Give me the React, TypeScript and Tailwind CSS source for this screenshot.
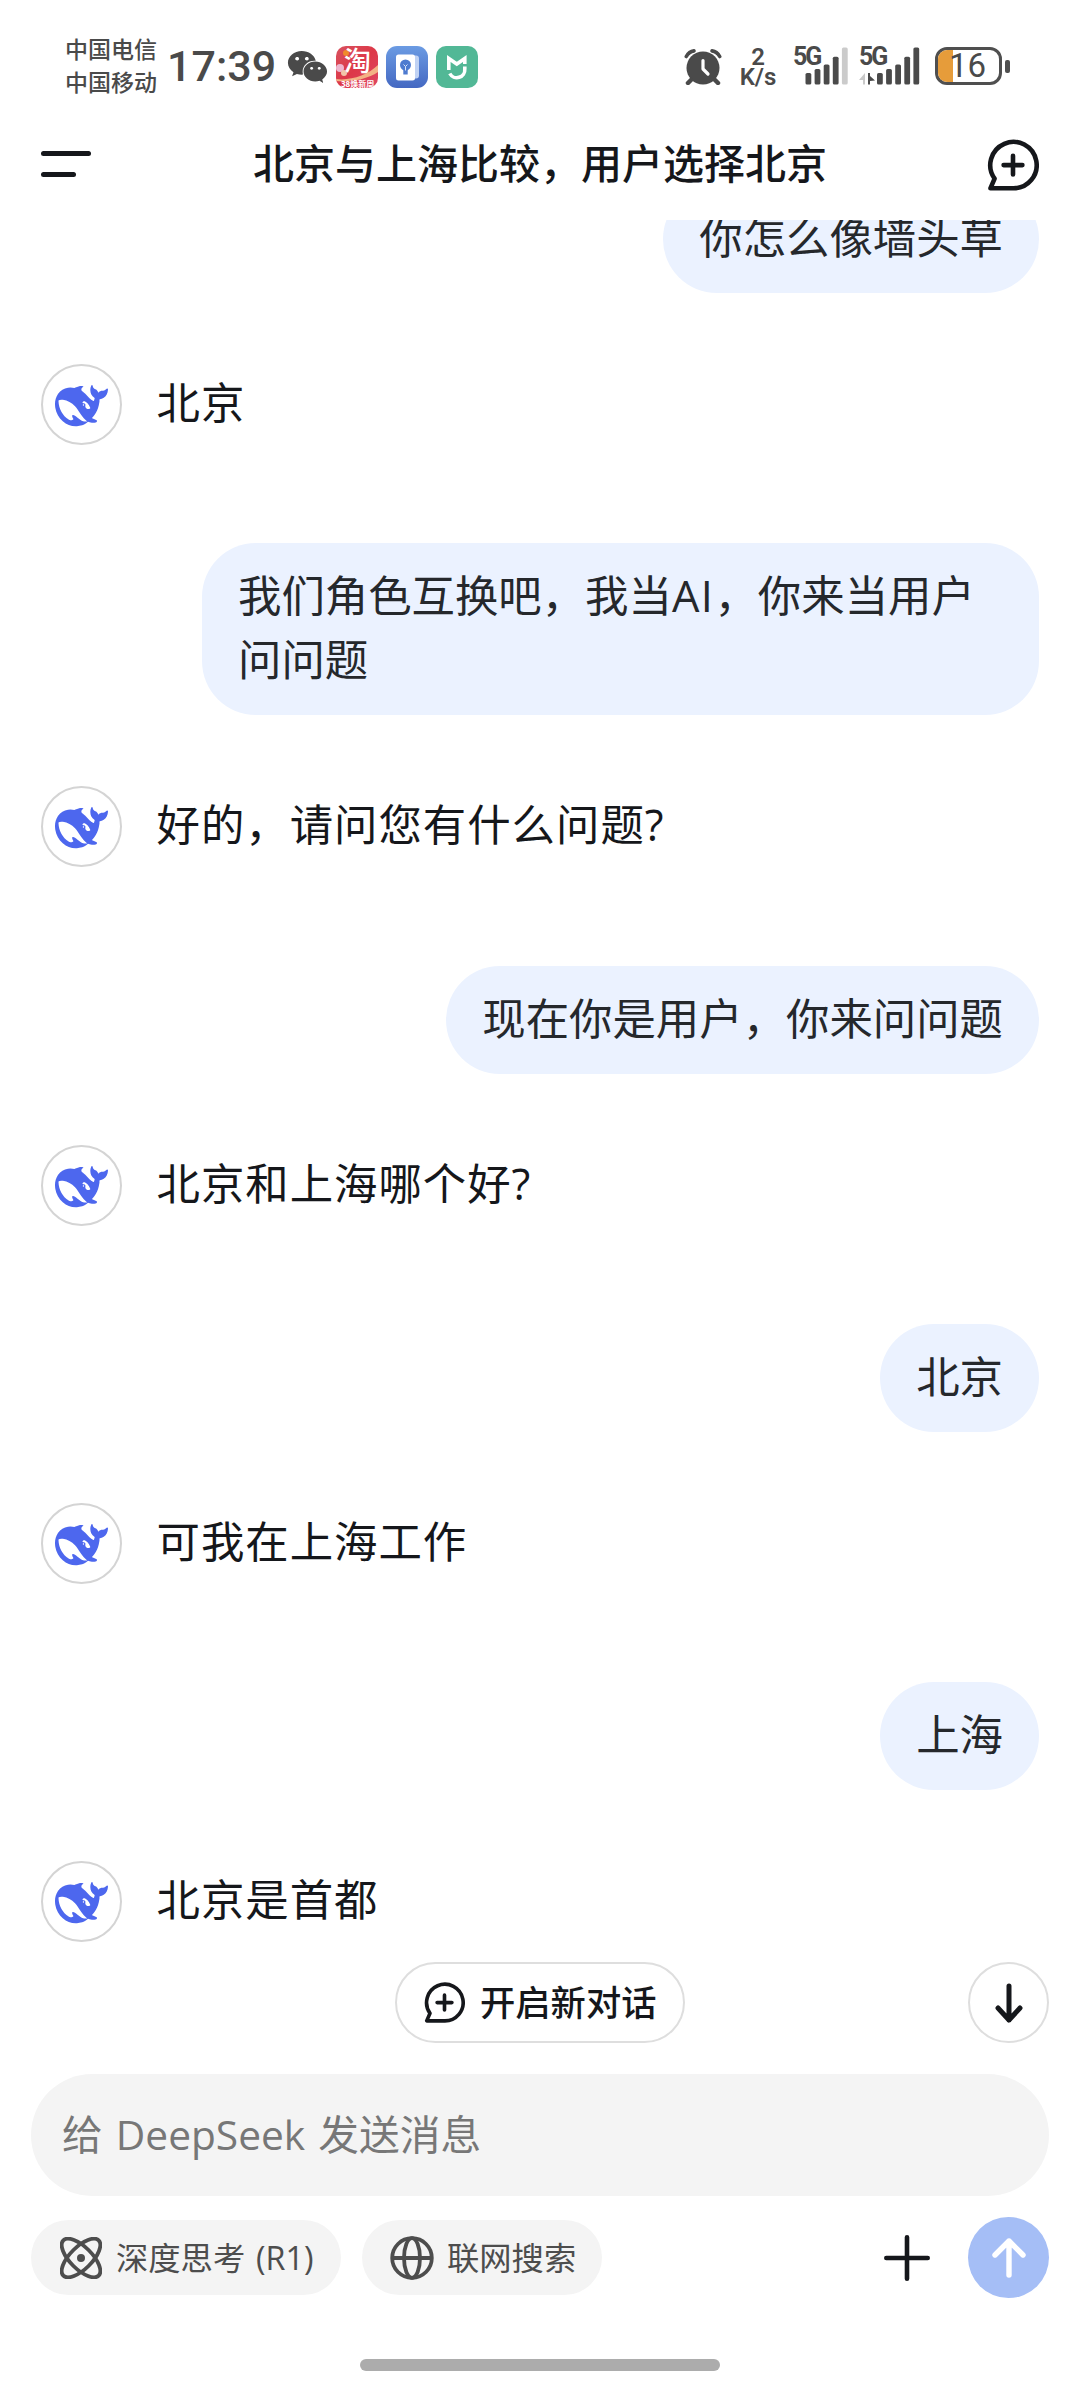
import React from 'react';
import { FaWeixin } from 'react-icons/fa';

type Message = {
  role: 'user' | 'bot';
  text: string;
};

const messages: Message[] = [
  { role: 'user', text: '你怎么像墙头草' },
  { role: 'bot', text: '北京' },
  { role: 'user', text: '我们角色互换吧，我当AI，你来当用户问问题' },
  { role: 'bot', text: '好的，请问您有什么问题?' },
  { role: 'user', text: '现在你是用户，你来问问题' },
  { role: 'bot', text: '北京和上海哪个好?' },
  { role: 'user', text: '北京' },
  { role: 'bot', text: '可我在上海工作' },
  { role: 'user', text: '上海' },
  { role: 'bot', text: '北京是首都' },
];

function WhaleIcon() {
  return (
    <svg viewBox="0 0 24 24" preserveAspectRatio="none" className="mt-[3px] ml-[1px] h-[56px] w-[53px] shrink-0 fill-[#4d67ee]">
      <path d="M23.748 4.482c-.254-.124-.364.113-.512.234-.051.039-.094.09-.137.136-.372.397-.806.657-1.373.626-.829-.046-1.537.214-2.163.848-.133-.782-.575-1.248-1.247-1.548-.352-.156-.708-.311-.955-.65-.172-.241-.219-.51-.305-.774-.055-.16-.11-.323-.293-.35-.2-.031-.278.136-.356.276-.313.572-.434 1.202-.422 1.84.027 1.436.633 2.58 1.838 3.393.137.093.172.187.129.323-.082.28-.18.552-.266.833-.055.179-.137.217-.329.14a5.526 5.526 0 01-1.736-1.18c-.857-.828-1.631-1.742-2.597-2.458a11.365 11.365 0 00-.689-.471c-.985-.957.13-1.743.388-1.836.27-.098.093-.432-.779-.428-.872.004-1.67.295-2.687.684a3.055 3.055 0 01-.465.137 9.597 9.597 0 00-2.883-.102c-1.885.21-3.39 1.102-4.497 2.623C.082 8.606-.231 10.684.152 12.85c.403 2.284 1.569 4.175 3.36 5.653 1.858 1.533 3.997 2.284 6.438 2.14 1.482-.085 3.133-.284 4.994-1.86.47.234.962.327 1.78.397.63.059 1.236-.03 1.705-.128.735-.156.684-.837.419-.961-2.155-1.004-1.682-.595-2.113-.926 1.096-1.296 2.746-2.642 3.392-7.003.05-.347.007-.565 0-.845-.004-.17.035-.237.23-.256a4.173 4.173 0 001.545-.475c1.396-.763 1.96-2.015 2.093-3.517.02-.23-.004-.467-.247-.588zM11.581 18c-2.089-1.642-3.102-2.183-3.52-2.16-.392.024-.321.471-.235.763.09.288.207.486.371.739.114.167.192.416-.113.603-.673.416-1.842-.14-1.897-.167-1.361-.802-2.5-1.86-3.301-3.307-.774-1.393-1.224-2.887-1.298-4.482-.02-.386.093-.522.477-.592a4.696 4.696 0 011.529-.039c2.132.312 3.946 1.265 5.468 2.774.868.86 1.525 1.887 2.202 2.891.72 1.066 1.494 2.082 2.48 2.914.348.292.625.514.891.677-.802.09-2.14.11-3.054-.614zm1-6.44a.306.306 0 01.415-.287.302.302 0 01.2.288.306.306 0 01-.31.307.303.303 0 01-.304-.308zm3.11 1.596c-.2.081-.399.151-.59.16a1.245 1.245 0 01-.798-.254c-.274-.23-.47-.358-.552-.758a1.73 1.73 0 01.016-.588c.07-.327-.008-.537-.239-.727-.187-.156-.426-.199-.688-.199a.559.559 0 01-.254-.078c-.11-.054-.2-.19-.114-.358.028-.054.16-.186.192-.21.356-.202.767-.136 1.146.016.352.144.618.408 1.001.782.391.451.462.576.685.914.176.265.336.537.445.848.067.195-.019.354-.25.452z" />
    </svg>
  );
}

function NewChatIcon({ className }: { className: string }) {
  return (
    <svg viewBox="0 0 52 52" fill="none" stroke="#15171b" strokeWidth="4.6" strokeLinecap="round" strokeLinejoin="round" className={className}>
      <path d="M26 49.3H3.4L7.6 39.6A23.2 23.2 0 1 1 26 49.3Z" />
      <path d="M26 16.7v18.8M16.6 26.1h18.8" />
    </svg>
  );
}

function AlarmIcon() {
  return (
    <svg viewBox="0 0 38 36" fill="none" stroke="#4a4a4a" strokeLinecap="round" className="h-9 w-[38px]">
      <circle cx="19" cy="19" r="16.5" fill="#4a4a4a" stroke="none" />
      <path d="M2.3 7.5C4 4.4 6.6 2.4 10 1.9M35.7 7.5C34 4.4 31.4 2.4 28 1.9" strokeWidth="3.6" />
      <path d="M7 31l-3 3M31 31l3 3" strokeWidth="4.5" />
      <path d="M19 11.5V20l5 5" stroke="#fff" strokeWidth="3.2" strokeLinejoin="round" />
    </svg>
  );
}

function Signal({ active, data }: { active: number; data?: boolean }) {
  const tops = [26, 22, 17.5, 9.7, 0.5];
  const start = data ? 18 : 12.5;
  return (
    <div className="relative h-[38px] w-[61px]">
      <span className="absolute left-0 top-0 font-['Roboto'] text-[25px] font-bold leading-[19px] tracking-[-2px]">5G</span>
      <svg viewBox="0 0 61 38" className="absolute inset-0 h-[38px] w-[61px]">
        {data && (
          <>
            <path d="M6 26v11.5H4V33H0z" fill="#c9c9c9" />
            <path d="M9 26h2v3l5 4.5-5 .5v3.5H9z" fill="#4a4a4a" />
          </>
        )}
        {tops.map((top, i) => (
          <rect key={top} x={start + i * 9.1} y={top} width="5.8" height={37.5 - top} rx="1.6" fill={i < active ? '#4a4a4a' : '#cbcbcb'} />
        ))}
      </svg>
    </div>
  );
}

function StatusBar() {
  return (
    <div className="flex h-[104px] items-start pl-[65px] pt-[34px] text-[#4a4a4a]">
      <div className="-mt-px w-[102px] text-[23px] font-medium leading-[32.5px]">
        <div>中国电信</div>
        <div>中国移动</div>
      </div>
      <div className="w-[120px] font-['Roboto'] text-[43px] font-medium leading-[64px]">17:39</div>
      <div className="mt-3 flex items-center">
        <FaWeixin className="h-[40px] w-[41px]" />
        <svg viewBox="0 0 42 42" className="ml-2 h-[42px] w-[42px]">
          <defs>
            <linearGradient id="shop" x1="0" y1="0" x2="1" y2="1">
              <stop offset="0" stopColor="#d8525f" />
              <stop offset=".5" stopColor="#dd3848" />
              <stop offset="1" stopColor="#df4663" />
            </linearGradient>
            <clipPath id="shopClip">
              <rect width="42" height="42" rx="10" />
            </clipPath>
          </defs>
          <g clipPath="url(#shopClip)">
            <rect width="42" height="42" fill="url(#shop)" />
            <circle cx="10" cy="7" r="3" fill="#f08a2c" />
            <circle cx="4" cy="22" r="4" fill="#eeb6cf" />
            <circle cx="8" cy="27" r="3" fill="#f2c6a8" />
            <path d="M0 33C14 35 32 29 42 19v7C32 33 16 36 0 35z" fill="#f3b184" />
            <text x="8" y="25" fontSize="27" fontWeight="500" fill="#fff">淘</text>
            <text x="5" y="41" fontSize="8" fontWeight="700" fill="#fff">38焕新周</text>
          </g>
        </svg>
        <svg viewBox="0 0 42 42" className="ml-2 h-[42px] w-[42px]">
          <defs>
            <linearGradient id="note" x1="0" y1="0" x2="0" y2="1">
              <stop offset="0" stopColor="#6b9be3" />
              <stop offset="1" stopColor="#4468c2" />
            </linearGradient>
          </defs>
          <rect width="42" height="42" rx="11" fill="url(#note)" />
          <path d="M27 9.5h3q3 0 3 3v17q0 3-3 3h-3z" fill="#c0d2f4" />
          <rect x="10" y="8.5" width="19" height="26" rx="2.5" fill="#fff" />
          <circle cx="19.5" cy="19" r="5.5" fill="#4e7bd0" />
          <path d="M17.3 22h4.4v6.5h-4.4z" fill="#4e7bd0" />
          <path d="M17.5 18.5l2 2 2-2M19.5 20.5v4" fill="none" stroke="#d9e5fa" strokeWidth="1" />
        </svg>
        <svg viewBox="0 0 42 42" className="ml-2 h-[42px] w-[42px]">
          <rect width="42" height="42" rx="10" fill="#52b896" />
          <path d="M12.8 24V12.5l8 5.5 8-5.5V18" fill="none" stroke="#fff" strokeWidth="3.6" />
          <path d="M28.8 20.5V23a8 8 0 0 1-15 4.5" fill="none" stroke="#fff" strokeWidth="3.6" />
        </svg>
      </div>
      <div className="ml-[206px] mt-[13px] flex items-start">
        <div className="mt-[2px]"><AlarmIcon /></div>
        <div className="ml-[15px] w-[42px] text-center font-['Roboto'] text-[24px] font-semibold leading-[20px]">
          <div>2</div>
          <div>K/s</div>
        </div>
        <div className="ml-[14px]"><Signal active={4} /></div>
        <div className="ml-[5px]"><Signal active={5} data /></div>
        <div className="ml-[15px] flex items-center">
          <div className="flex h-[38px] w-[67px] overflow-hidden rounded-[12px] border-[3.5px] border-[#4f4f4f]">
            <div className="h-full w-[15px] shrink-0 bg-[#e69c3a]" />
            <span className="-ml-1 font-['Roboto'] text-[33px] leading-[32px]">16</span>
          </div>
          <div className="ml-[3px] h-[13px] w-[5px] rounded-[2px] bg-[#4f4f4f]" />
        </div>
      </div>
    </div>
  );
}

function Header() {
  return (
    <header className="flex h-[116px] items-center justify-between pl-[41px] pr-[41px]">
      <div className="mt-1 flex w-[52px] flex-col gap-4">
        <div className="h-[5px] w-[50px] rounded-full bg-[#15171b]" />
        <div className="h-[5px] w-[35px] rounded-full bg-[#15171b]" />
      </div>
      <h1 className="pt-[2px] text-[41px] font-medium leading-[60px] text-[#15171b]">北京与上海比较，用户选择北京</h1>
      <NewChatIcon className="mt-[5px] h-[52px] w-[52px]" />
    </header>
  );
}

function UserBubble({ text }: { text: string }) {
  return (
    <div className="flex justify-end pr-[41px]">
      <div className="max-w-[837px] rounded-[54px] bg-[#ebf2ff] px-9 pt-[21px] pb-[23px] text-[43.4px] leading-[64px] text-[#25282c]">
        {text.split(/([A-Za-z]+)/).map((part, i) =>
          /^[A-Za-z]+$/.test(part) ? <span key={i} className="tracking-[1.5px]">{part}</span> : part
        )}
      </div>
    </div>
  );
}

function BotMessage({ text }: { text: string }) {
  return (
    <div className="mt-[71px] mb-[98.3px] flex h-[81px] items-center pl-[40.5px]">
      <div className="flex h-[81px] w-[81px] items-center justify-center rounded-full border-[2.5px] border-[#d4d4d4]">
        <WhaleIcon />
      </div>
      <p className="ml-[35px] pb-[3px] text-[43.4px] leading-[64px] tracking-[1px] text-[#15171b]">{text}</p>
    </div>
  );
}

export default function App() {
  return (
    <div className="flex h-[2398px] w-[1080px] flex-col overflow-hidden bg-white font-['Open_Sans','Noto_Sans_CJK_SC',sans-serif]">
      <StatusBar />
      <Header />

      <main className="h-[1742px] shrink-0 overflow-hidden">
        <div className="-mt-[35px]">
          {messages.map((m, i) =>
            m.role === 'user' ? <UserBubble key={i} text={m.text} /> : <BotMessage key={i} text={m.text} />
          )}
        </div>
      </main>

      <div className="flex shrink-0 items-center justify-end pr-[31px]">
        <button className="mr-[283px] flex h-[81px] w-[290px] items-center rounded-full border-[2.5px] border-[#dedede] pl-[27px]">
          <NewChatIcon className="h-[41px] w-[41px]" />
          <span className="ml-[15px] text-[35.3px] font-medium text-[#15171b]">开启新对话</span>
        </button>
        <button className="flex h-[81px] w-[81px] items-center justify-center rounded-full border-[2.5px] border-[#dedede]">
          <svg viewBox="0 0 40 40" fill="none" stroke="#15171b" strokeWidth="5" strokeLinecap="round" strokeLinejoin="round" className="h-10 w-10">
            <path d="M20 3v34M9 25l11 12 11-12" />
          </svg>
        </button>
      </div>

      <footer className="mt-[31px] px-[31px]">
        <div className="flex h-[122px] items-center rounded-full bg-[#f4f4f4] pl-[31px] text-[40.7px] text-[#777] [word-spacing:2.5px]">
          给 DeepSeek 发送消息
        </div>
        <div className="mt-[21px] flex h-[81px] items-center text-[#4d4d4d]">
          <button className="flex h-[75px] w-[310px] items-center rounded-full bg-[#f4f4f4] pl-[29px]">
            <svg viewBox="0 0 42 42" fill="none" stroke="#4d4d4d" strokeWidth="3.8" className="h-[42px] w-[42px]">
              <ellipse cx="21" cy="21" rx="25" ry="11" transform="rotate(45 21 21)" />
              <ellipse cx="21" cy="21" rx="25" ry="11" transform="rotate(-45 21 21)" />
              <circle cx="21" cy="21" r="4" fill="#4d4d4d" stroke="none" />
            </svg>
            <span className="ml-[14px] text-[32.3px] [word-spacing:2.5px]">深度思考 (R1)</span>
          </button>
          <button className="ml-[21px] flex h-[75px] w-[240px] items-center rounded-full bg-[#f4f4f4] pl-[28px]">
            <svg viewBox="0 0 44 44" fill="none" stroke="#4d4d4d" strokeWidth="3.8" className="h-11 w-11">
              <circle cx="22" cy="22" r="19.8" />
              <ellipse cx="22" cy="22" rx="8" ry="19.8" />
              <path d="M2 22h40" />
            </svg>
            <span className="ml-[13px] text-[32.3px]">联网搜索</span>
          </button>
          <svg viewBox="0 0 46 46" stroke="#15171b" strokeWidth="4.6" strokeLinecap="round" className="ml-auto h-[46px] w-[46px]">
            <path d="M23 2.3v41.4M2.3 23h41.4" />
          </svg>
          <button className="ml-[38px] flex h-[81px] w-[81px] items-center justify-center rounded-full bg-[#a5bef6]">
            <svg viewBox="0 0 40 40" fill="none" stroke="#fff" strokeWidth="5.4" strokeLinecap="round" strokeLinejoin="round" className="h-10 w-10">
              <path d="M20 37V3M6 17L20 3l14 14" />
            </svg>
          </button>
        </div>
      </footer>

      <div className="mx-auto mt-[61px] h-3 w-[360px] rounded-full bg-[#acacac]" />
    </div>
  );
}
